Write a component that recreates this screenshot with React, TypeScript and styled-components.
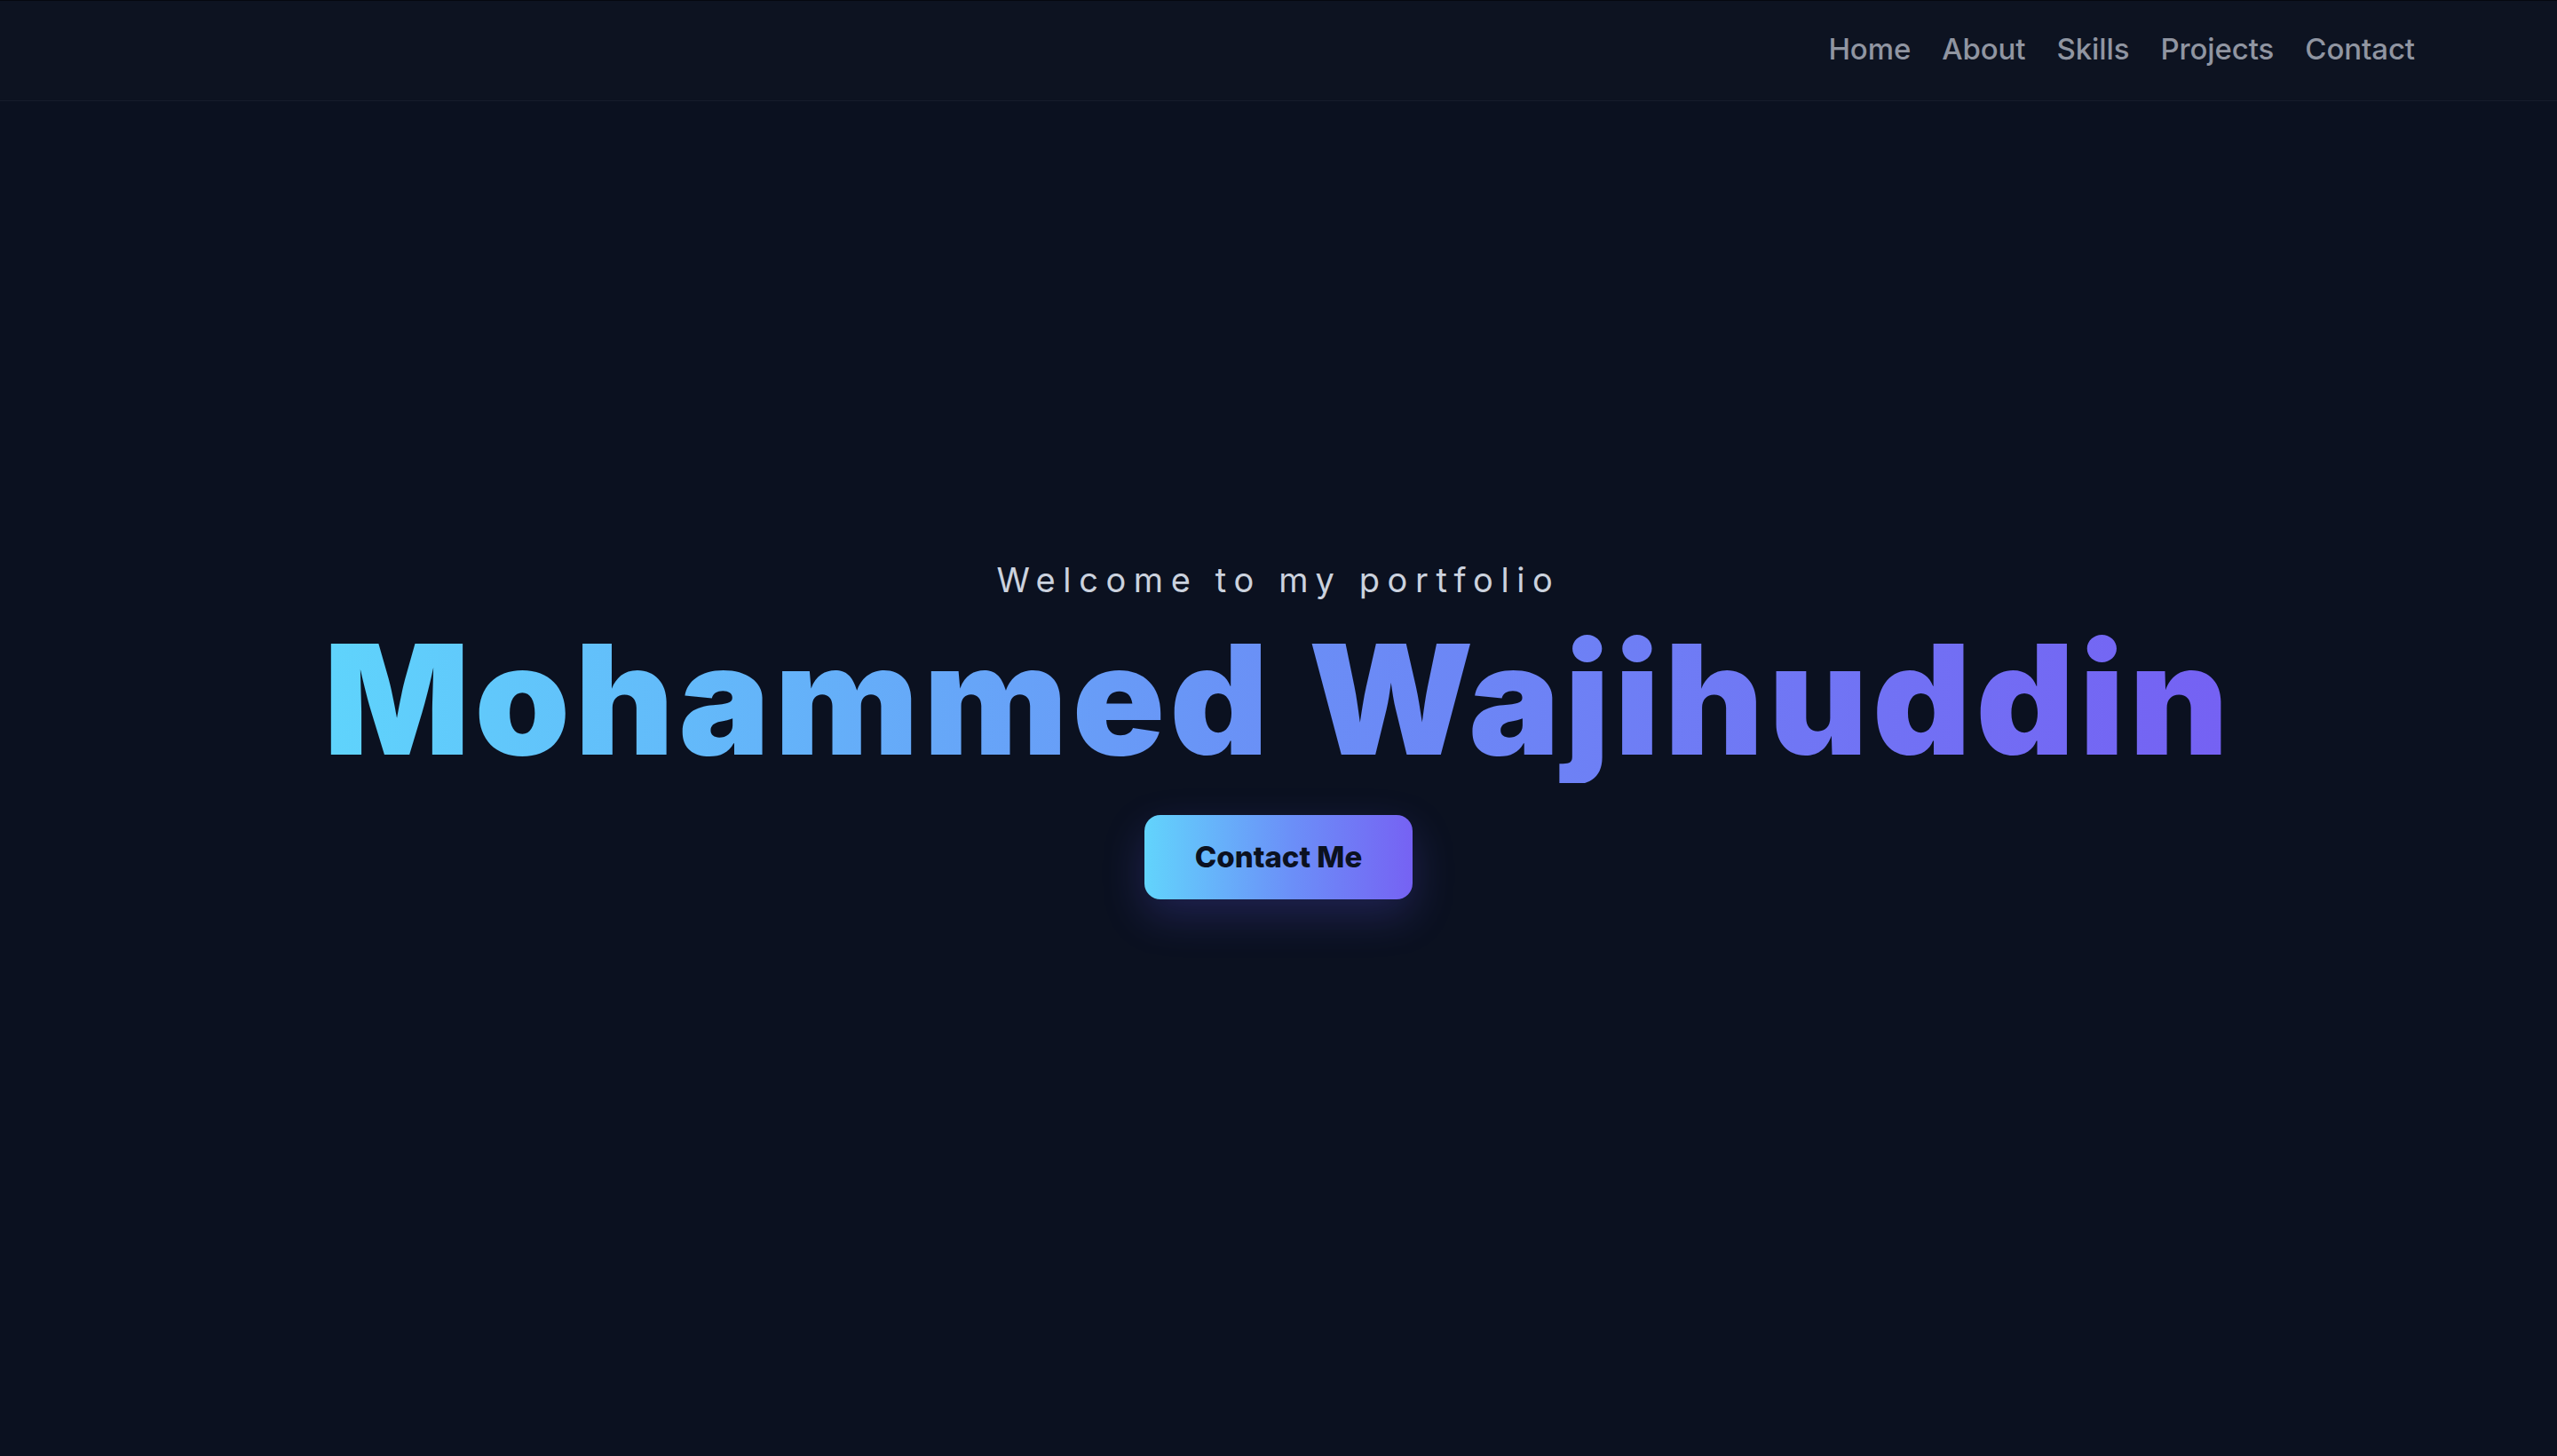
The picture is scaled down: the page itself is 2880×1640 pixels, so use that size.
import React from "react";
import styled, { createGlobalStyle } from "styled-components";

const GlobalStyle = createGlobalStyle`
  * { box-sizing: border-box; }
  html, body { margin: 0; padding: 0; background: #0b1120; }
  body { font-family: "Inter", "Noto Sans", sans-serif; color: #cbd5e1; }
`;

const Page = styled.div`
  min-height: 100vh;
  display: flex;
  flex-direction: column;
  background: #0b1120;
  border-top: 1px solid #05080f;
`;

const Header = styled.header`
  height: 113px;
  display: flex;
  align-items: center;
  justify-content: flex-end;
  padding: 0 160px 4px 0;
  background: #0d1321;
  border-bottom: 1px solid #161c2b;
`;

const Nav = styled.nav`
  display: flex;
  align-items: center;
  gap: 35px;
`;

const NavLink = styled.a`
  font-family: "Inter", sans-serif;
  font-size: 33px;
  font-weight: 500;
  color: #9095a1;
  text-decoration: none;
  letter-spacing: -0.1px;
`;

const Hero = styled.main`
  flex: 1;
  display: flex;
  flex-direction: column;
  align-items: center;
  padding-top: 511px;
`;

const Welcome = styled.p`
  margin: 0;
  font-family: "Inter", sans-serif;
  font-size: 38px;
  line-height: 57px;
  font-weight: 400;
  letter-spacing: 8.6px;
  color: #cbd2de;
`;

const Title = styled.h1`
  margin: 11px 0 0;
  font-family: "Inter", sans-serif;
  font-size: 172px;
  line-height: 189px;
  font-weight: 900;
  letter-spacing: 5.4px;
  background: linear-gradient(90deg, #5fd4fc 0%, #6a8ff6 50%, #7561f3 100%);
  -webkit-background-clip: text;
  background-clip: text;
  color: transparent;
`;

const ContactButton = styled.button`
  margin-top: 36px;
  border: none;
  cursor: pointer;
  padding: 28px 57px;
  border-radius: 18px;
  font-family: "Inter", sans-serif;
  font-size: 33px;
  line-height: 39px;
  font-weight: 800;
  letter-spacing: 0;
  color: #0b1120;
  background: linear-gradient(90deg, #62d4fc 0%, #6b8ff8 55%, #7662f3 100%);
  box-shadow: 0 18px 48px rgba(104, 96, 255, 0.22);
`;

const links = ["Home", "About", "Skills", "Projects", "Contact"];

export default function App() {
  return (
    <>
      <GlobalStyle />
      <Page>
        <Header>
          <Nav>
            {links.map((l) => (
              <NavLink key={l} href={`#${l.toLowerCase()}`}>
                {l}
              </NavLink>
            ))}
          </Nav>
        </Header>
        <Hero>
          <Welcome>Welcome to my portfolio</Welcome>
          <Title>Mohammed Wajihuddin</Title>
          <ContactButton>Contact Me</ContactButton>
        </Hero>
      </Page>
    </>
  );
}
